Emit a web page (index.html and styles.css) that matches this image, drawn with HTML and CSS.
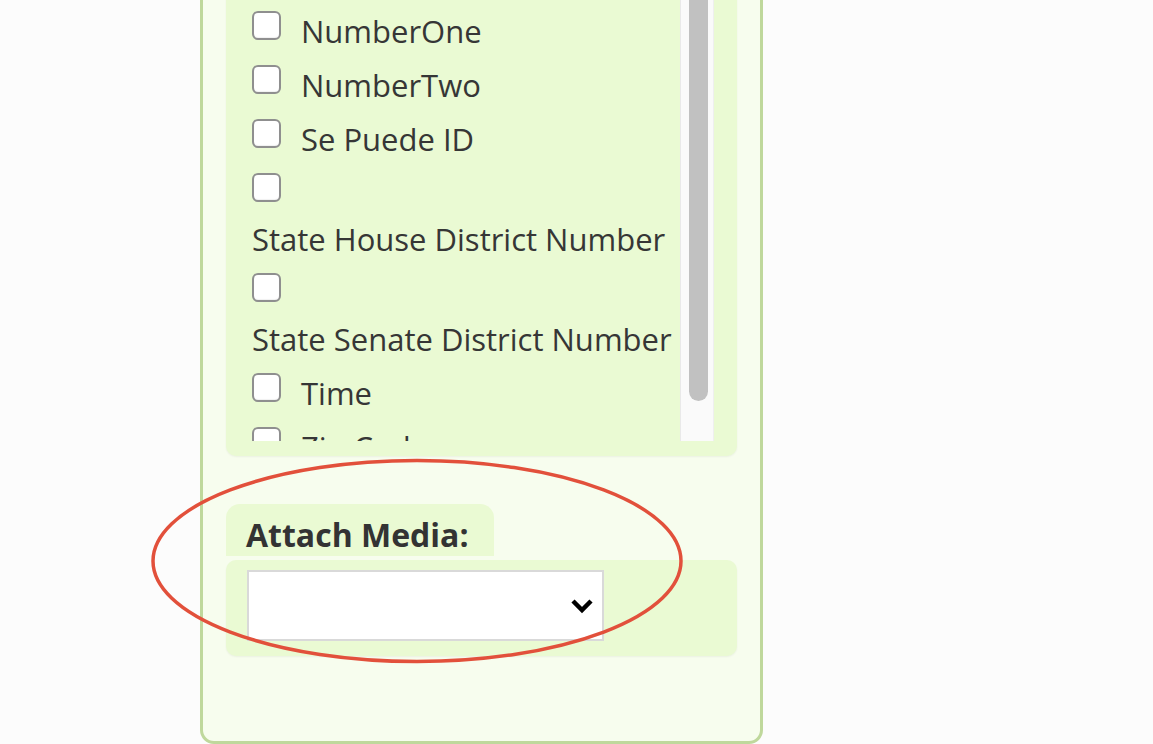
FILE: index.html
```html
<!DOCTYPE html>
<html lang="en">
<head>
<meta charset="utf-8">
<title>Fields</title>
<link rel="stylesheet" href="styles.css">
</head>
<body>
<div class="panel">
  <div class="list-box">
    <div class="list-scroll">
      <div class="list-inner">
        <label class="item"><input type="checkbox" class="cb"><span class="lbl">NumberOne</span></label>
        <label class="item"><input type="checkbox" class="cb"><span class="lbl">NumberTwo</span></label>
        <label class="item"><input type="checkbox" class="cb"><span class="lbl">Se Puede ID</span></label>
        <label class="item"><input type="checkbox" class="cb"><span class="lbl">State House District Number</span></label>
        <label class="item"><input type="checkbox" class="cb"><span class="lbl">State Senate District Number</span></label>
        <label class="item"><input type="checkbox" class="cb"><span class="lbl">Time</span></label>
        <label class="item"><input type="checkbox" class="cb"><span class="lbl">Zip Code</span></label>
      </div>
      <div class="scrollbar"><div class="thumb"></div></div>
    </div>
  </div>

  <div class="media-tab">Attach Media:</div>
  <div class="media-box">
    <div class="select">
      <svg class="chev" width="24" height="16" viewBox="0 0 24 16"><polyline points="3,3 12,12 21,3" fill="none" stroke="#000" stroke-width="4.5" stroke-linecap="butt" stroke-linejoin="miter"/></svg>
    </div>
  </div>
</div>

<svg class="annot" width="1153" height="744" viewBox="0 0 1153 744">
  <ellipse cx="417" cy="561" rx="264" ry="100.5" fill="none" stroke="#e2503b" stroke-width="3.5"/>
</svg>
</body>
</html>
```

FILE: styles.css
```css
html, body {
  margin: 0;
  padding: 0;
}
body {
  background: #fcfcfc;
  font-family: "Open Sans", "Noto Sans", sans-serif;
  color: #363636;
  position: relative;
  height: 744px;
  overflow: hidden;
}
.panel {
  box-sizing: border-box;
  margin-left: 200px;
  margin-top: -40px;
  width: 563px;
  height: 784px;
  border: 3px solid #bfd89c;
  border-radius: 14px;
  background: #f7fdee;
  padding: 20px 23px 0 23px;
}
.list-box {
  background: #eafad3;
  border-radius: 10px;
  padding: 15px 23px 15px 26px;
  box-shadow: 0 1px 2px rgba(0, 0, 0, 0.05);
}
.list-scroll {
  height: 443px;
  display: flex;
  overflow: hidden;
}
.list-inner {
  flex: 1;
  min-width: 0;
  padding-top: 2px;
  overflow: hidden;
}
.scrollbar {
  width: 34px;
  flex: none;
  box-sizing: border-box;
  background: #fafafa;
  border-left: 1px solid #e9e9e9;
  border-right: 1px solid #efefef;
  padding-left: 8px;
}
.thumb {
  width: 19px;
  height: 403px;
  background: #c1c1c1;
  border-radius: 0 0 10px 10px;
}
.item {
  display: block;
  font-size: 31px;
  line-height: 46px;
}
.lbl {
  display: inline-block;
  white-space: nowrap;
}
.cb {
  -webkit-appearance: none;
  appearance: none;
  width: 29px;
  height: 29px;
  margin: 11px 20px 3px 0;
  vertical-align: baseline;
  border: 2px solid #8f8f8f;
  border-radius: 6px;
  background: #fff;
  box-shadow: inset 0 -1px 1px rgba(0, 0, 0, 0.06);
  box-sizing: border-box;
}
.media-tab {
  margin-top: 48px;
  width: 268px;
  height: 52px;
  padding: 11px 0 0 20px;
  box-sizing: border-box;
  background: #eafad3;
  border-radius: 14px 14px 0 0;
  font-size: 32px;
  line-height: 40px;
  font-weight: 700;
  color: #333;
}
.media-box {
  margin-top: 4px;
  height: 96px;
  box-sizing: border-box;
  padding: 10px 21px 15px 21px;
  background: #eafad3;
  border-radius: 10px;
  box-shadow: 0 1px 2px rgba(0, 0, 0, 0.05);
}
.select {
  width: 357px;
  height: 71px;
  box-sizing: border-box;
  border: 2px solid #d9d9d9;
  background: #fff;
  display: flex;
  align-items: center;
  justify-content: flex-end;
  padding-right: 8px;
}
.chev {
  display: block;
  margin-top: 1px;
}
.annot {
  position: absolute;
  left: 0;
  top: 0;
  pointer-events: none;
}
```
